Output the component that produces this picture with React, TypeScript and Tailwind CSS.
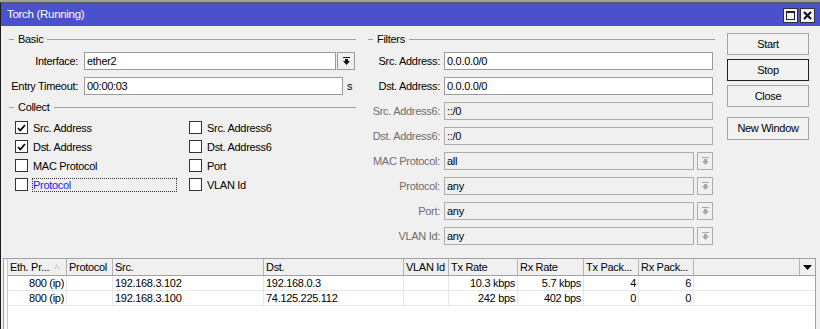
import React from 'react';

const FONT = "font-['Liberation_Sans',Arial,sans-serif] text-[11px] tracking-[-0.3px] leading-[13px]";

const DropIcon = ({ color }: { color: string }) => (
  <svg width="7" height="8" viewBox="0 0 7 8" fill={color}>
    <rect x="0" y="0" width="7" height="1" />
    <rect x="2" y="2" width="3" height="3" />
    <polygon points="0,4 7,4 3.5,8" />
  </svg>
);

const Sep = ({ label, className = '' }: { label: string; className?: string }) => (
  <div className={'flex items-center h-[14px] ' + className}>
    <div className="w-[5px] h-px bg-[#a0a0a0]" />
    <span className="px-[4px]">{label}</span>
    <div className="flex-1 h-px bg-[#a0a0a0]" />
  </div>
);

const Check = ({ checked, label, focus }: { checked?: boolean; label: string; focus?: boolean }) => (
  <div className="flex items-center h-[19px]">
    <div className="w-[13px] h-[13px] border border-[#333333] bg-white flex items-center justify-center">
      {checked && (
        <svg width="9" height="8" viewBox="0 0 9 8">
          <path d="M1 4 L3.3 6.5 L8 1" stroke="#000" strokeWidth="1.8" fill="none" />
        </svg>
      )}
    </div>
    <span
      className={
        'ml-[4px] h-[14px] leading-[12px] border ' +
        (focus ? 'w-[145px] border-dotted border-[#333333] text-[#2020ff]' : 'border-transparent')
      }
    >
      {label}
    </span>
  </div>
);

const FilterRow = ({ label, value, disabled, combo }: { label: string; value: string; disabled?: boolean; combo?: boolean }) => (
  <div className="flex items-center h-[18px]">
    <div className={'w-[72px] text-right whitespace-nowrap ' + (disabled ? 'text-[#6d6d6d]' : '')}>{label}</div>
    <div
      className={
        'ml-[4px] flex-1 h-[18px] border flex items-center pl-[2px] ' +
        (disabled ? 'border-[#acacac] bg-[#f0f0f0]' : 'border-[#9a9a9a] bg-white')
      }
    >
      {value}
    </div>
    {combo && (
      <div className="ml-[3px] w-[16px] h-[18px] border border-[#acacac] bg-[#f0f0f0] flex items-center justify-center">
        <DropIcon color="#a8a8a8" />
      </div>
    )}
    <div className="w-[2px]" />
  </div>
);

const Btn = ({ label, def, className = '' }: { label: string; def?: boolean; className?: string }) => (
  <div
    className={
      'h-[22px] border flex items-center justify-center bg-[#f2f2f2] ' +
      (def ? 'border-[#222222]' : 'border-[#a6a6a6]') +
      ' ' +
      className
    }
  >
    {label}
  </div>
);

const cols = [
  { h: 'Eth. Pr...', w: 'w-[59px]', r: true },
  { h: 'Protocol', w: 'w-[46px]', r: false },
  { h: 'Src.', w: 'w-[151px]', r: false },
  { h: 'Dst.', w: 'w-[140px]', r: false },
  { h: 'VLAN Id', w: 'w-[45px]', r: false },
  { h: 'Tx Rate', w: 'w-[69px]', r: true },
  { h: 'Rx Rate', w: 'w-[66px]', r: true },
  { h: 'Tx Pack...', w: 'w-[55px]', r: true },
  { h: 'Rx Pack...', w: 'w-[55px]', r: true },
];

const rows = [
  ['800 (ip)', '', '192.168.3.102', '192.168.0.3', '', '10.3 kbps', '5.7 kbps', '4', '6'],
  ['800 (ip)', '', '192.168.3.100', '74.125.225.112', '', '242 bps', '402 bps', '0', '0'],
];

export default function App() {
  return (
    <div className={'w-[820px] h-[329px] overflow-hidden bg-[#f0f0f0] text-black ' + FONT}>
      <div className="h-[2px] bg-[#a0a0a0]" />
      <div className="h-px bg-[#5a5a5a]" />
      <div className="border-l border-[#1a1a1a]">
        {/* title bar */}
        <div className="h-[23px] bg-[#4b50cd] flex items-center pl-[6px] pr-[5px] text-white">
          <span className="flex-1 text-[11.5px]">Torch (Running)</span>
          <div className="flex gap-[2px] mt-[1px]">
            <div className="w-[15px] h-[15px] border border-[#333333] bg-[#f0f0f0] flex items-center justify-center">
              <div className="w-[9px] h-[9px] border border-[#222222] border-t-2" />
            </div>
            <div className="w-[15px] h-[15px] border border-[#333333] bg-[#f0f0f0] flex items-center justify-center">
              <svg width="9" height="9" viewBox="0 0 9 9">
                <path d="M1 1 L8 8 M8 1 L1 8" stroke="#111" strokeWidth="2" />
              </svg>
            </div>
          </div>
        </div>

        {/* top section */}
        <div className="h-[232px] flex">
          {/* Basic / Collect */}
          <div className="ml-[7px] w-[348px] pt-[6px]">
            <Sep label="Basic" className="ml-px" />
            <div className="mt-[6px] flex items-center h-[18px]">
              <div className="w-[70px] text-right">Interface:</div>
              <div className="ml-[6px] w-[252px] h-[18px] border border-[#9a9a9a] bg-white flex items-center pl-[2px]">ether2</div>
              <div className="ml-[1px] w-[18px] h-[18px] border border-[#9a9a9a] bg-[#f0f0f0] flex items-center justify-center">
                <DropIcon color="#111" />
              </div>
            </div>
            <div className="mt-[7px] flex items-center h-[18px]">
              <div className="w-[70px] text-right whitespace-nowrap">Entry Timeout:</div>
              <div className="ml-[6px] w-[259px] h-[18px] border border-[#9a9a9a] bg-white flex items-center pl-[2px]">00:00:03</div>
              <span className="ml-[4px]">s</span>
            </div>
            <Sep label="Collect" className="mt-[5px] ml-px" />
            <div className="mt-[4px] grid grid-cols-[181px_1fr]">
              <div className="pl-[7px]">
                <Check checked label="Src. Address" />
                <Check checked label="Dst. Address" />
                <Check label="MAC Protocol" />
                <Check label="Protocol" focus />
              </div>
              <div>
                <Check label="Src. Address6" />
                <Check label="Dst. Address6" />
                <Check label="Port" />
                <Check label="VLAN Id" />
              </div>
            </div>
          </div>

          {/* Filters */}
          <div className="ml-[12px] w-[347px] pt-[6px]">
            <Sep label="Filters" />
            <div className="mt-[6px] flex flex-col gap-[7px]">
              <FilterRow label="Src. Address:" value="0.0.0.0/0" />
              <FilterRow label="Dst. Address:" value="0.0.0.0/0" />
              <FilterRow label="Src. Address6:" value="::/0" disabled />
              <FilterRow label="Dst. Address6:" value="::/0" disabled />
              <FilterRow label="MAC Protocol:" value="all" disabled combo />
              <FilterRow label="Protocol:" value="any" disabled combo />
              <FilterRow label="Port:" value="any" disabled combo />
              <FilterRow label="VLAN Id:" value="any" disabled combo />
            </div>
          </div>

          {/* Buttons */}
          <div className="ml-[12px] w-[82px] pt-[7px] flex flex-col">
            <Btn label="Start" />
            <Btn label="Stop" def className="mt-[4px]" />
            <Btn label="Close" className="mt-[4px]" />
            <Btn label="New Window" className="mt-[10px] h-[23px]" />
          </div>
        </div>

        {/* table */}
        <div className="ml-[2px] w-[813px] h-[120px] border border-[#a0a0a0] bg-white flex">
          <div className="w-[4px] border-r border-[#c8c8c8] bg-[#f7f7f7]" />
          <div className="flex-1 flex flex-col">
            <div className="h-[17px] flex border-b border-[#a0a0a0] bg-[#f0f0f0]">
              {cols.map((c, i) => (
                <div key={i} className={c.w + ' border-r border-[#b4b4b4] pl-[2px] flex items-center whitespace-nowrap'}>
                  {c.h}
                  {i === 0 && (
                    <svg className="ml-[5px]" width="6" height="6" viewBox="0 0 6 6">
                      <path d="M0.5 5.5 L3 0.8 L5.5 5.5" stroke="#c4c4c4" fill="none" />
                    </svg>
                  )}
                </div>
              ))}
              <div className="flex-1 border-r border-[#b4b4b4]" />
              <div className="w-[15px] flex items-center justify-center">
                <svg width="9" height="5" viewBox="0 0 9 5">
                  <polygon points="0,0 9,0 4.5,5" fill="#000" />
                </svg>
              </div>
            </div>
            {rows.map((r, ri) => (
              <div key={ri} className="h-[15px] flex border-b border-[#e6e6e6]">
                {cols.map((c, i) => (
                  <div
                    key={i}
                    className={
                      c.w +
                      ' border-r border-[#e6e6e6] flex items-center whitespace-nowrap ' +
                      (c.r ? 'justify-end pr-[2px]' : 'pl-[2px]')
                    }
                  >
                    {r[i]}
                  </div>
                ))}
                <div className="flex-1" />
              </div>
            ))}
          </div>
        </div>
      </div>
    </div>
  );
}
